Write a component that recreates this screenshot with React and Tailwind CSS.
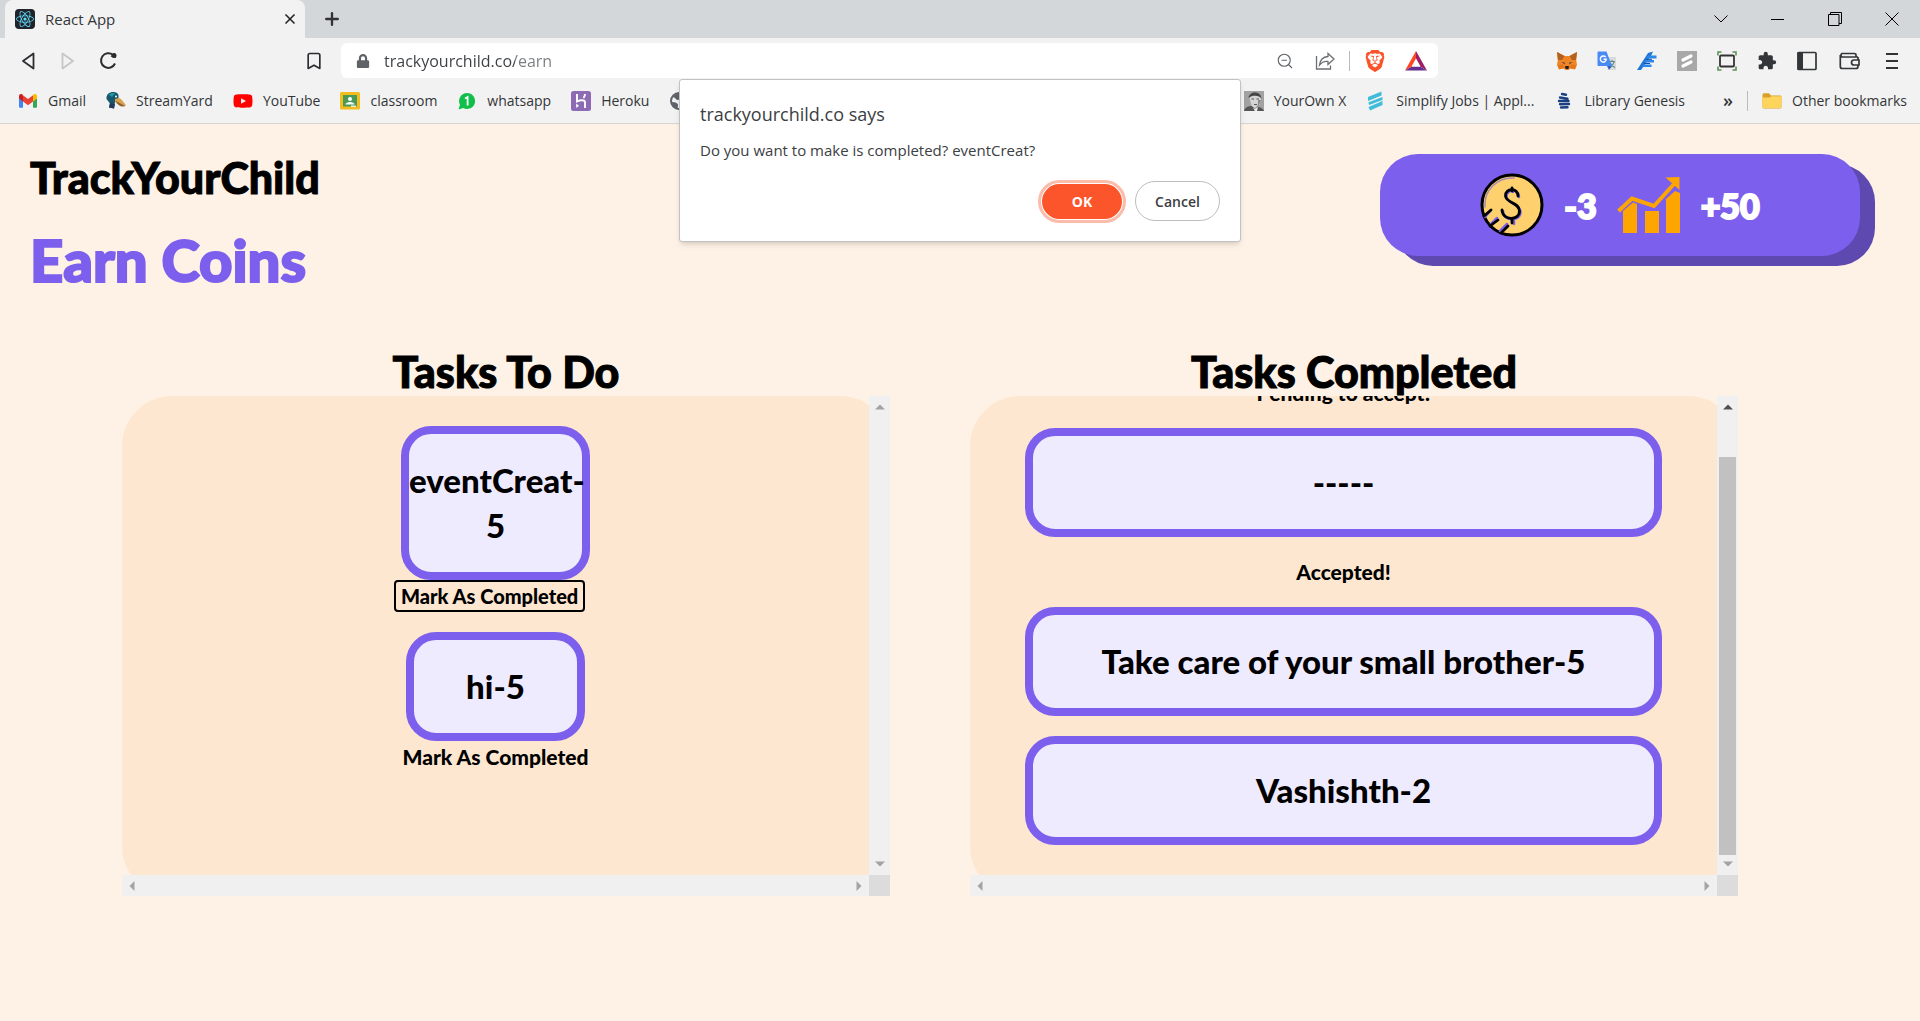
import React from 'react'
import { FaReact, FaYoutube, FaLock } from 'react-icons/fa'
import { MdExtension } from 'react-icons/md'
import { SiBrave } from 'react-icons/si'
import { ZoomOut, Bookmark, X, Plus } from 'lucide-react'

const GmailIcon = () => (
  <svg viewBox="0 0 20 20" className="size-5 shrink-0">
    <path d="M1 4.500v11c0 .8.6 1.300 1.300 1.300H5V9.500z" fill="#4285f4" />
    <path d="M19 4.500v11c0 .8-.6 1.300-1.300 1.300H15V9.500z" fill="#34a853" />
    <path d="M15 5v5.500l4-3V5c0-1.900-2.100-2.700-3.500-1.600z" fill="#fbbc04" />
    <path d="M1 5v2.500l4 3V5l-.5-1.600C3 2.300 1 3.100 1 5z" fill="#c5221f" />
    <path d="M5 4.200v6.300l5 3.700 5-3.700V4.200L10 8z" fill="#ea4335" />
  </svg>
)

const DuckIcon = () => (
  <svg viewBox="0 0 20 20" className="size-5 shrink-0">
    <path d="M.5 8C0 3 4 .5 8 1c4 .3 5 3 4.500 6L9 11l-1 6.500-5-1 1-4z" fill="#17586e" />
    <path d="M3 4c1-2 4-2.500 6-1.500L6 6z" fill="#1f96a0" />
    <path d="M4 12l5 1-1 4.500-5-1z" fill="#223a5c" />
    <path d="M9 8l4-1c3 1 5 5 7 7l-1.500 1.500C14 15 11 13 9 11z" fill="#d9a14c" />
    <path d="M10 10l9 5-2 .5c-3 0-6-2-7-5.500z" fill="#8c6239" />
    <circle cx="10" cy="5.500" r="1" fill="#fff" />
  </svg>
)

const ClassroomIcon = () => (
  <svg viewBox="0 0 20 20" className="size-5 shrink-0">
    <rect y="1" width="20" height="17.500" rx="1.500" fill="#f4bc1c" />
    <rect x="3" y="4" width="14" height="11.500" fill="#4a9a57" />
    <circle cx="10" cy="8" r="2" fill="#fff" />
    <path d="M5.500 13.500c0-3.500 9-3.500 9 0z" fill="#fff" />
    <rect x="11" y="14.500" width="5" height="1.500" fill="#e8eee8" />
  </svg>
)

const WhatsappIcon = () => (
  <svg viewBox="0 0 20 20" className="size-5 shrink-0">
    <path d="M10 2a8 8 0 1 1-3.800 15L1.500 18.500 3 13.800A8 8 0 0 1 10 2z" fill="#0fbf4a" />
    <path d="M8 7.500L10.600 6v8.500" fill="none" stroke="#fff" strokeWidth="1.800" />
  </svg>
)

const HerokuIcon = () => (
  <svg viewBox="0 0 20 20" className="size-5 shrink-0">
    <rect width="20" height="20" rx="2.500" fill="#8d6bb4" />
    <path d="M6 3v7.500c3-1.500 8-2.200 8 1V17M14 3c0 1.700-.6 2.800-1.500 4" fill="none" stroke="#fff" strokeWidth="1.900" />
    <path d="M5.200 12.500L8 14.800 5.200 17z" fill="#fff" />
  </svg>
)

const GlobeIcon = () => (
  <svg viewBox="0 0 20 20" className="size-5 shrink-0">
    <circle cx="10" cy="10" r="8" fill="none" stroke="#5f6368" strokeWidth="2" />
    <path d="M3 6c4 0 3 3 6 3s2-4 5-5l-5-2zM3 11c3 0 6 1 6 3s-1 3 0 4c-4 0-6-4-6-7z" fill="#5f6368" />
  </svg>
)

const PortraitIcon = () => (
  <svg viewBox="0 0 20 20" className="size-5 shrink-0">
    <rect width="20" height="20" fill="#a2a2a2" />
    <path d="M5.500 7c0-5 11-5 11.500 1l-1.500 6-4 3.500-4-3z" fill="#d4d4d4" />
    <path d="M4.500 7C5 0 17-1 17.500 8 16 4 9 4 6 6z" fill="#454545" />
    <path d="M7.500 8h2.500M12.500 8H15M10 13.500h3" stroke="#555" strokeWidth="1.200" />
    <path d="M14 9v5l-3 3 3.500-1.500L17 9z" fill="#8a8a8a" />
    <path d="M0 20c1-4 5-5 7.500-5l3.500 3 3-2c3 0 5 2 6 4z" fill="#555" />
    <path d="M9 17l2 3h2l1-4-3 2z" fill="#eee" />
  </svg>
)

const SimplifyIcon = () => (
  <svg viewBox="0 0 20 20" className="size-5 shrink-0">
    <path d="M2 6L15.500.500v4L2 10zM2.500 11.200L16.500 6v3L3 14zM2.500 16L16.500 10v4L4 19.500z" fill="#40bcd8" />
  </svg>
)

const LibgenIcon = () => (
  <svg viewBox="0 0 20 20" className="size-5 shrink-0">
    <path
      d="M8 3l4 .8M6 6.500l7.500 1.200M5 10h9.500M6 13.300l9-.3M7 16.500l6.500-.3"
      stroke="#1a3f80"
      strokeWidth="2.400"
      strokeLinecap="round"
    />
  </svg>
)

const FolderIcon = () => (
  <svg viewBox="0 0 20 20" className="size-5 shrink-0">
    <path d="M0.500 4c0-1 .6-1.700 1.500-1.700h5l2 2.200h9c.9 0 1.500.6 1.500 1.500v10c0 .9-.6 1.500-1.500 1.500H2c-.9 0-1.500-.6-1.500-1.500z" fill="#d9a02a" />
    <path d="M0.500 6.500h7l2-1.300H18c.9 0 1.500.5 1.500 1.300v9c0 .9-.6 1.500-1.500 1.500H2c-.9 0-1.500-.6-1.500-1.500z" fill="#fdd45c" />
  </svg>
)

const MetamaskIcon = () => (
  <svg viewBox="0 0 20 20" className="size-5 shrink-0">
    <path d="M0 1l7.500 4h5L20 1l-.8 8 .8 5-2 4.500-4.500-1-2 1.500h-3l-2-1.500-4.500 1L0 14l.8-5z" fill="#f08526" />
    <path d="M0 1l7.500 4L5 9H1zM20 1l-7.500 4L15 9h4z" fill="#b5601f" />
    <path d="M4.500 11l3 .5.500 2zM15.500 11l-3 .5-.5 2z" fill="#3c3c4a" />
    <path d="M8 16l.5-1h3l.5 1-.7 2H8.700z" fill="#1d1d22" />
    <path d="M1 14l5-.5 1.500 3.500-5.500 1zM19 14l-5-.5-1.500 3.500 5.500 1z" fill="#e2761b" />
  </svg>
)

const TranslateIcon = () => (
  <svg viewBox="0 0 20 20" className="size-5 shrink-0">
    <path d="M8 6h11v13h-7z" fill="#d8dadc" />
    <path d="M12 10.500h6M15 9v1.500M17 11c-.5 3-3 4.500-4.500 5.500M13 12c1 2 3 3.500 5 4.500" fill="none" stroke="#5f8a80" strokeWidth="1.200" />
    <path d="M1.500.5h8L15 15H1.500C.8 15 .5 14.500.500 14V1.500c0-.6.4-1 1-1z" fill="#4a8af4" />
    <path d="M10 15h5l-3 4z" fill="#2f63c4" />
    <path d="M8.700 6.200A3 3 0 1 0 9.300 8.300H6.500" fill="none" stroke="#fff" strokeWidth="1.400" />
  </svg>
)

const FeatherIcon = () => (
  <svg viewBox="0 0 20 20" className="size-5 shrink-0">
    <path d="M0 19L11 2l5-1.500L14 5 4 19z" fill="#1f74d8" />
    <path d="M11 4.500h8.500v3H9zM8.500 9h8.500v2.500H7zM6 13.500h8.500V16H4.500z" fill="#2f86ea" />
    <path d="M9 8.300h6M7 12.500h6" stroke="#1550a8" />
  </svg>
)

const GraySimplifyIcon = () => (
  <svg viewBox="0 0 20 20" className="size-5 shrink-0">
    <rect width="20" height="20" fill="#a8a8a8" />
    <path d="M6 9l8-4M6 15l8-4" stroke="#fff" strokeWidth="3.200" strokeLinecap="round" />
  </svg>
)

const CaptureIcon = () => (
  <svg viewBox="0 0 20 20" className="size-5 shrink-0" fill="none">
    <path d="M1 4.500V1h3.500M15.500 1H19v3.500M19 15.500V19h-3.500M4.500 19H1v-3.500" stroke="#5d9158" strokeWidth="1.600" />
    <rect x="3" y="4.500" width="14" height="11" rx="1" stroke="#333" strokeWidth="1.800" />
  </svg>
)

const SidebarIcon = () => (
  <svg viewBox="0 0 20 20" className="size-5 shrink-0">
    <rect x="1" y="1.500" width="18" height="17" rx="1" fill="none" stroke="#333638" strokeWidth="1.700" />
    <rect x="0.500" y="1" width="5.500" height="18" fill="#333638" />
  </svg>
)

const WalletIcon = () => (
  <svg viewBox="0 0 24 20" className="h-5 w-6 shrink-0" fill="none" stroke="#333638" strokeWidth="1.700">
    <path d="M21 6H5a2 2 0 0 1 0-3.500h12c1 0 2 .6 2 1.500v2M3.300 4v11.500c0 1.100.9 2 2 2H19c1.100 0 2-.9 2-2V6" />
    <path d="M22 9h-5a2.500 2.500 0 0 0 0 5h5z" fill="#f2f2f2" />
  </svg>
)

const ShareIcon = () => (
  <svg viewBox="0 0 20 20" className="size-5 shrink-0" fill="none" stroke="#6b6e72" strokeWidth="1.300">
    <path d="M1.500 5v13h14v-3.500" />
    <path d="M13 2.500L19 8l-6 5.500v-3C9 10 6.500 11.500 4.500 14 5 9.500 8 6 13 5.500z" />
  </svg>
)

const BatIcon = () => (
  <svg viewBox="0 0 22 20" className="h-5 w-6 shrink-0">
    <path d="M11 0L0 19.500l7-4L11 8z" fill="#ff4724" />
    <path d="M11 0l11 19.500-7-4L11 8z" fill="#9e1f63" />
    <path d="M0 19.500h22l-7-4H7z" fill="#662d91" />
    <path d="M11 7.500l-4.500 8h9z" fill="#fff" />
  </svg>
)

const CoinIcon = () => (
  <svg viewBox="0 0 64 64" className="size-16 shrink-0" fill="none" strokeLinecap="round">
    <circle cx="32" cy="32" r="30" fill="#ffd16e" stroke="#000" strokeWidth="3" />
    <path d="M5 34A27 27 0 0 1 34 5" stroke="#a98bb0" strokeWidth="1.500" />
    <g stroke="#7c5fec" strokeWidth="2.500">
      <path d="M39 24c0-9-13-8-12.500 0C27 31 40 30 40.500 39c0 10-17 10-17.500-1M33 16v3M34 48v3" />
      <path d="M5 44l6-7M11 51l6-6M20 58l7-7" />
    </g>
    <g stroke="#000" strokeWidth="2.800">
      <path d="M38 23c0-9-13-8-12.500 0C26 30 39 29 39.500 38c0 10-17 10-17.500-1M32 15v3M32 46v4" />
      <path d="M4 43l7-6M10 53l8-6M21 60l7-7" />
    </g>
  </svg>
)

const GrowthIcon = () => (
  <svg viewBox="0 0 64 58" className="h-[58px] w-16 shrink-0" fill="orange">
    <path d="M6 35l10-8.500 4 1.500v29H6zM28 35h14v22H28zM49 23l9-8 5 2v40H49z" />
    <path d="M1.500 35L15 22.500 37 30 57 8" fill="none" stroke="orange" strokeWidth="4" />
    <path d="M48.500 1.500L62.500 1v13z" />
  </svg>
)

const bookmarks = [
  { name: 'Gmail', icon: <GmailIcon /> },
  { name: 'StreamYard', icon: <DuckIcon /> },
  { name: 'YouTube', icon: <FaYoutube className="size-5 shrink-0 text-[#ff0000]" /> },
  { name: 'classroom', icon: <ClassroomIcon /> },
  { name: 'whatsapp', icon: <WhatsappIcon /> },
  { name: 'Heroku', icon: <HerokuIcon /> },
]

const moreBookmarks = [
  { name: 'YourOwn X', icon: <PortraitIcon /> },
  { name: 'Simplify Jobs | Appl...', icon: <SimplifyIcon /> },
  { name: 'Library Genesis', icon: <LibgenIcon /> },
]

const extensions = [
  { name: 'MetaMask', icon: <MetamaskIcon /> },
  { name: 'Translate', icon: <TranslateIcon /> },
  { name: 'Notes', icon: <FeatherIcon /> },
  { name: 'Simplify', icon: <GraySimplifyIcon /> },
  { name: 'Capture', icon: <CaptureIcon /> },
  { name: 'Extensions', icon: <MdExtension className="size-5 text-[#333638]" /> },
  { name: 'Sidebar', icon: <SidebarIcon /> },
  { name: 'Wallet', icon: <WalletIcon /> },
]

function BookmarkLink({ name, icon }) {
  return (
    <a href="#" className="flex items-center gap-[10px] whitespace-nowrap">
      {icon}
      {name}
    </a>
  )
}

function TabStrip() {
  return (
    <div className="flex h-[38px] items-stretch bg-[#d3d7da] pl-[5px]">
      <div className="flex w-[300px] items-center rounded-t-lg bg-[#f2f2f2] pl-[10px] pr-[7px]">
        <span className="flex size-5 items-center justify-center rounded-sm bg-[#20232a]">
          <FaReact className="size-[18px] text-[#61dafb]" />
        </span>
        <span className="ml-[10px] flex-1 text-[15px] leading-5 text-[#333638]">React App</span>
        <button aria-label="Close tab">
          <X className="size-4 text-[#222]" strokeWidth={2.5} />
        </button>
      </div>
      <button aria-label="New tab" className="ml-[17px] text-[#333]">
        <Plus className="size-5" strokeWidth={2.8} />
      </button>
      <div className="ml-auto flex text-black">
        <button aria-label="Search tabs" className="flex w-[57px] items-center justify-center">
          <svg viewBox="0 0 14 8" className="h-2 w-[14px]" fill="none" stroke="currentColor">
            <path d="M.5.500l6.500 6.500L13.500.500" />
          </svg>
        </button>
        <button aria-label="Minimize" className="flex w-[57px] items-center justify-center">
          <span className="h-px w-[13px] bg-black" />
        </button>
        <button aria-label="Restore" className="flex w-[57px] items-center justify-center">
          <svg viewBox="0 0 14 14" className="size-[14px]" fill="none" stroke="currentColor">
            <path d="M.5 2.500h10.500v11H.500zM2.500 2.500v-2h11v11h-2.500" />
          </svg>
        </button>
        <button aria-label="Close" className="flex w-[57px] items-center justify-center">
          <svg viewBox="0 0 14 14" className="size-[14px]" fill="none" stroke="currentColor">
            <path d="M.5.500l13 13M13.500.500l-13 13" />
          </svg>
        </button>
      </div>
    </div>
  )
}

function Toolbar() {
  return (
    <div className="flex h-[45px] items-center pl-[18px] pr-[17px]">
      <div className="flex items-center gap-5">
        <button aria-label="Back">
          <svg viewBox="0 0 20 20" className="size-5" fill="none" stroke="#2b2d30" strokeWidth="1.800" strokeLinejoin="round">
            <path d="M15.500 2.500v15L5 10z" />
          </svg>
        </button>
        <button aria-label="Forward">
          <svg viewBox="0 0 20 20" className="size-5" fill="none" stroke="#c4c6c8" strokeWidth="1.800" strokeLinejoin="round">
            <path d="M4.500 2.500v15L15 10z" />
          </svg>
        </button>
        <button aria-label="Reload">
          <svg viewBox="0 0 20 20" className="size-5" fill="none" stroke="#2b2d30" strokeWidth="2">
            <path d="M15 4A7.300 7.300 0 1 0 17 12.500" />
            <path d="M12.500 5.500L17 2l1 5z" fill="#2b2d30" stroke="none" />
            <circle cx="16" cy="4.500" r="2.500" fill="#2b2d30" stroke="none" />
          </svg>
        </button>
      </div>
      <button aria-label="Bookmark this tab" className="ml-[186px]">
        <Bookmark className="size-5 text-[#2b2d30]" />
      </button>
      <div className="ml-[17px] flex h-[35px] flex-1 items-center rounded-md bg-white pl-[15px] pr-[10px]">
        <FaLock className="size-[14px] text-[#5f6368]" />
        <input
          aria-label="Address"
          defaultValue="trackyourchild.co/earn"
          className="ml-[14px] min-w-0 flex-1 bg-[linear-gradient(90deg,#3c3f43_131px,#7a7d80_131px)] bg-clip-text text-[16px] text-transparent outline-none"
        />
        <button aria-label="Zoom">
          <ZoomOut className="size-[18px] text-[#5f6368]" strokeWidth={1.5} />
        </button>
        <button aria-label="Share" className="ml-[21px]">
          <ShareIcon />
        </button>
        <span className="ml-[14px] h-5 w-px bg-[#bbb]" />
        <button aria-label="Shields" className="ml-[14px]">
          <SiBrave className="size-[22px] text-[#fb542b]" />
        </button>
        <button aria-label="Rewards" className="ml-[18px]">
          <BatIcon />
        </button>
      </div>
      <div className="ml-[119px] flex items-center gap-5">
        {extensions.map((ext) => (
          <button key={ext.name} aria-label={ext.name}>
            {ext.icon}
          </button>
        ))}
        <button aria-label="Menu" className="flex w-[22px] flex-col items-center gap-[5px]">
          <span className="h-[2px] w-3 bg-[#333]" />
          <span className="h-[2px] w-3 bg-[#333]" />
          <span className="h-[2px] w-3 bg-[#333]" />
        </button>
      </div>
    </div>
  )
}

function BookmarksBar() {
  return (
    <nav className="flex h-[41px] items-center gap-5 border-b border-[#d8d4d0] pl-[18px] pr-[13px] pb-[5px] text-[14px] text-[#333638]">
      {bookmarks.map((item) => (
        <BookmarkLink key={item.name} name={item.name} icon={item.icon} />
      ))}
      <a href="#" aria-label="Bookmark" className="flex-1">
        <GlobeIcon />
      </a>
      {moreBookmarks.map((item) => (
        <BookmarkLink key={item.name} name={item.name} icon={item.icon} />
      ))}
      <div className="flex items-center gap-[14px] pl-[18px]">
        <button className="text-[18px] font-semibold">»</button>
        <span className="h-5 w-px bg-[#bbb]" />
        <BookmarkLink name="Other bookmarks" icon={<FolderIcon />} />
      </div>
    </nav>
  )
}

function ConfirmDialog() {
  return (
    <div
      role="dialog"
      aria-labelledby="dialog-title"
      className="absolute left-1/2 top-[79px] z-10 w-[562px] -translate-x-1/2 rounded-[3px] border border-[#c2c2c2] bg-white p-5 text-[#3c4043] shadow-md"
    >
      <h2 id="dialog-title" className="text-[18px] leading-7">trackyourchild.co says</h2>
      <p className="mt-[10px] text-[15px] leading-6">Do you want to make is completed? eventCreat?</p>
      <div className="mt-[19px] flex items-center justify-end gap-[13px] text-[14px] font-semibold">
        <button className="h-[35px] w-20 rounded-full bg-[#fc542b] font-bold text-white outline-3 outline-offset-1 outline-[#fbbcac]">
          OK
        </button>
        <button className="h-10 w-[85px] rounded-full border border-[#bdbdbd]">Cancel</button>
      </div>
    </div>
  )
}

function ScoreCard({ coins, growth }) {
  return (
    <div className="mt-[30px] mr-[60px] flex h-[102px] w-[480px] items-center justify-center gap-5 rounded-[38px] bg-[#7c5fec] text-[34px] font-black text-white shadow-[15px_10px_0_#5d49b0] [-webkit-text-stroke:2px]">
      <CoinIcon />
      <span>{coins}</span>
      <GrowthIcon />
      <span>{growth}</span>
    </div>
  )
}

function Arrow({ d, dark }) {
  return (
    <svg viewBox="0 0 10 10" className="m-[5px] size-[10px] shrink-0" fill={dark ? '#505050' : '#a3a3a3'}>
      <path d={d} />
    </svg>
  )
}

function Panel({ title, scrolled, children }) {
  return (
    <section className="min-w-0 flex-1">
      <h2 className="pb-[2px] text-center text-[43px] font-black leading-[44px] [-webkit-text-stroke:1px]">{title}</h2>
      <div className="grid h-[500px] grid-cols-[1fr_21px] grid-rows-[1fr_21px] rounded-[50px] bg-[#fee7d0]">
        <div className="flex min-h-0 flex-col overflow-hidden">{children}</div>
        <div className="flex flex-col items-center bg-[#f0f0f0]">
          <Arrow d="M0 8.500h10L5 3.500z" dark={scrolled} />
          <div className={scrolled ? 'mt-[41px] w-[17px] flex-1 bg-[#c1c1c1]' : 'flex-1'} />
          <Arrow d="M0 1.500h10L5 6.500z" />
        </div>
        <div className="flex items-center justify-between bg-[#f0f0f0]">
          <Arrow d="M7.500 0v10L2.500 5z" />
          <Arrow d="M2.500 0v10L7.500 5z" />
        </div>
        <div className="bg-[#dcdcdc]" />
      </div>
    </section>
  )
}

function CompletedTask({ children }) {
  return (
    <div className="shrink-0 rounded-[30px] border-8 border-[#7c5fec] bg-[#efebff] py-6 text-center text-[33px] font-black leading-[45px]">
      {children}
    </div>
  )
}

export default function App() {
  return (
    <div className="relative min-h-screen bg-[#fef1e5] font-['Open_Sans',sans-serif]">
      <header className="bg-[#f2f2f2]">
        <TabStrip />
        <Toolbar />
        <BookmarksBar />
      </header>

      <ConfirmDialog />

      <main className="font-['Lato',sans-serif] text-black">
        <div className="flex items-start justify-between pl-[30px]">
          <div className="pt-6">
            <h1 className="text-[43px] font-black leading-[60px] [-webkit-text-stroke:1px]">TrackYourChild</h1>
            <p className="mt-[10px] text-[58px] font-black leading-[84px] text-[#7c5fec] [-webkit-text-stroke:2px]">Earn Coins</p>
          </div>
          <ScoreCard coins="-3" growth="+50" />
        </div>

        <div className="mt-12 flex gap-20 pl-[122px] pr-[182px]">
          <Panel title="Tasks To Do">
            <div className="flex flex-col items-center gap-5 pt-[30px] text-[33px] font-black leading-[45px]">
              <div className="flex w-[189px] flex-col items-start">
                <div className="w-full rounded-[30px] border-8 border-[#7c5fec] bg-[#efebff] py-6 text-center">
                  eventCreat-
                  <br />5
                </div>
                <button className="-ml-[7px] rounded-sm border-2 border-black px-[5px] py-[3px] text-[20px] leading-[22px] whitespace-nowrap">
                  Mark As Completed
                </button>
              </div>
              <div className="flex w-[189px] flex-col items-center">
                <div className="w-[179px] rounded-[30px] border-8 border-[#7c5fec] bg-[#efebff] py-6 text-center">
                  hi-5
                </div>
                <button className="text-[21px] leading-8 whitespace-nowrap">Mark As Completed</button>
              </div>
            </div>
          </Panel>

          <Panel title="Tasks Completed" scrolled>
            <div className="flex min-h-0 flex-1 flex-col justify-end gap-5 px-[55px] pb-[30px]">
              <h3 className="shrink-0 text-center text-[21px] font-black leading-[30px]">Pending to accept!</h3>
              <CompletedTask>-----</CompletedTask>
              <h3 className="shrink-0 text-center text-[21px] font-black leading-[30px]">Accepted!</h3>
              <CompletedTask>Take care of your small brother-5</CompletedTask>
              <CompletedTask>Vashishth-2</CompletedTask>
            </div>
          </Panel>
        </div>
      </main>
    </div>
  )
}
